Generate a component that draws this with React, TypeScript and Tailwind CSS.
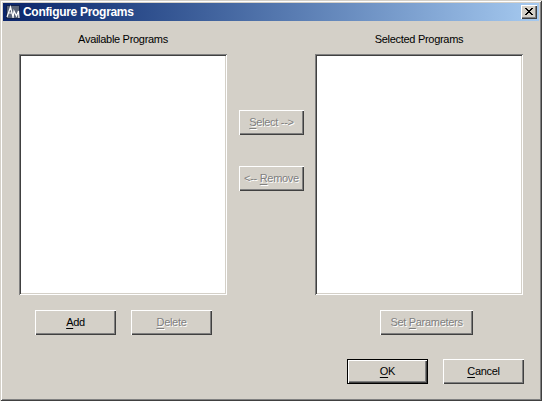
import React from 'react';

const raised = 'shadow-[inset_1px_1px_0_#ffffff,inset_-1px_-1px_0_#404040,inset_-2px_-2px_0_#808080]';
const font = "font-['Liberation_Sans',sans-serif]";

function Btn({ pre = '', mnemonic, post, disabled, primary, className = '' }: { pre?: string; mnemonic: string; post: string; disabled?: boolean; primary?: boolean; className?: string }) {
  return (
    <div
      className={`flex h-[25px] items-center justify-center whitespace-nowrap bg-[#d4d0c8] text-[11px] tracking-[-0.3px] ${raised} ${primary ? 'border border-black' : ''} ${disabled ? 'text-[#808080] [text-shadow:1px_1px_0_#ffffff]' : 'text-black'} ${className}`}
    >
      <span>
        {pre}
        <u className="underline underline-offset-2">{mnemonic}</u>
        {post}
      </span>
    </div>
  );
}

function ListBox({ label }: { label: string }) {
  return (
    <>
      <div className="h-[14px] text-center text-[11px] leading-[14px] tracking-[-0.3px] text-black">{label}</div>
      <div className="mt-2 h-[241px] w-[208px] bg-white shadow-[inset_1px_1px_0_#808080,inset_-1px_-1px_0_#ffffff,inset_2px_2px_0_#404040,inset_-2px_-2px_0_#d4d0c8]" />
    </>
  );
}

export default function App() {
  return (
    <div className={`h-[401px] w-[542px] overflow-hidden bg-[#d4d0c8] p-[3px] shadow-[inset_1px_1px_0_#d4d0c8,inset_-1px_-1px_0_#404040,inset_2px_2px_0_#ffffff,inset_-2px_-2px_0_#808080] ${font}`}>
      <div className="flex h-[18px] items-center bg-gradient-to-r from-[#0a246a] to-[#a6caf0] pl-[3px] pr-[2px]">
        <svg width="14" height="14" viewBox="0 0 14 14" className="shrink-0">
          <rect width="14" height="14" fill="#10204a" />
          <rect x="1" y="1" width="12" height="12" fill="#5a6478" />
          <path d="M1 12 L4.5 2 L7 12 M2.5 8 H6 M7 13 L8 6 L10.5 11 L12.5 6 L13 13" fill="none" stroke="#ffffff" strokeWidth="1.2" />
        </svg>
        <span className="ml-[3px] text-[12px] font-bold leading-none tracking-[-0.3px] text-white">Configure Programs</span>
        <div className={`ml-auto flex h-[14px] w-[16px] items-center justify-center bg-[#d4d0c8] ${raised}`}>
          <svg width="8" height="7" viewBox="0 0 8 7" className="mb-px" shapeRendering="crispEdges">
            <path d="M0 0h2v1h-2zM6 0h2v1h-2zM1 1h2v1h-2zM5 1h2v1h-2zM2 2h4v1h-4zM3 3h2v1h-2zM2 4h4v1h-4zM1 5h2v1h-2zM5 5h2v1h-2zM0 6h2v1h-2zM6 6h2v1h-2z" fill="#000000" />
          </svg>
        </div>
      </div>

      <div className="px-4 pt-[11px]">
        <div className="flex">
          <div className="w-[208px]">
            <ListBox label="Available Programs" />
            <div className="mt-[15px] flex gap-[15px] pl-4">
              <Btn mnemonic="A" post="dd" className="w-[81px]" />
              <Btn mnemonic="D" post="elete" disabled className="w-[81px]" />
            </div>
          </div>

          <div className="flex w-[88px] flex-col gap-[31px] pl-3 pt-[78px]">
            <Btn mnemonic="S" post="elect -->" disabled className="w-[65px]" />
            <Btn pre="<-- " mnemonic="R" post="emove" disabled className="w-[65px]" />
          </div>

          <div className="w-[208px]">
            <ListBox label="Selected Programs" />
            <div className="mt-[15px] flex pl-[65px]">
              <Btn pre="Set " mnemonic="P" post="arameters" disabled className="w-[93px]" />
            </div>
          </div>
        </div>

        <div className="-mr-px mt-6 flex justify-end gap-[15px]">
          <Btn mnemonic="O" post="K" primary className="w-[81px]" />
          <Btn mnemonic="C" post="ancel" className="w-[81px]" />
        </div>
      </div>
    </div>
  );
}
